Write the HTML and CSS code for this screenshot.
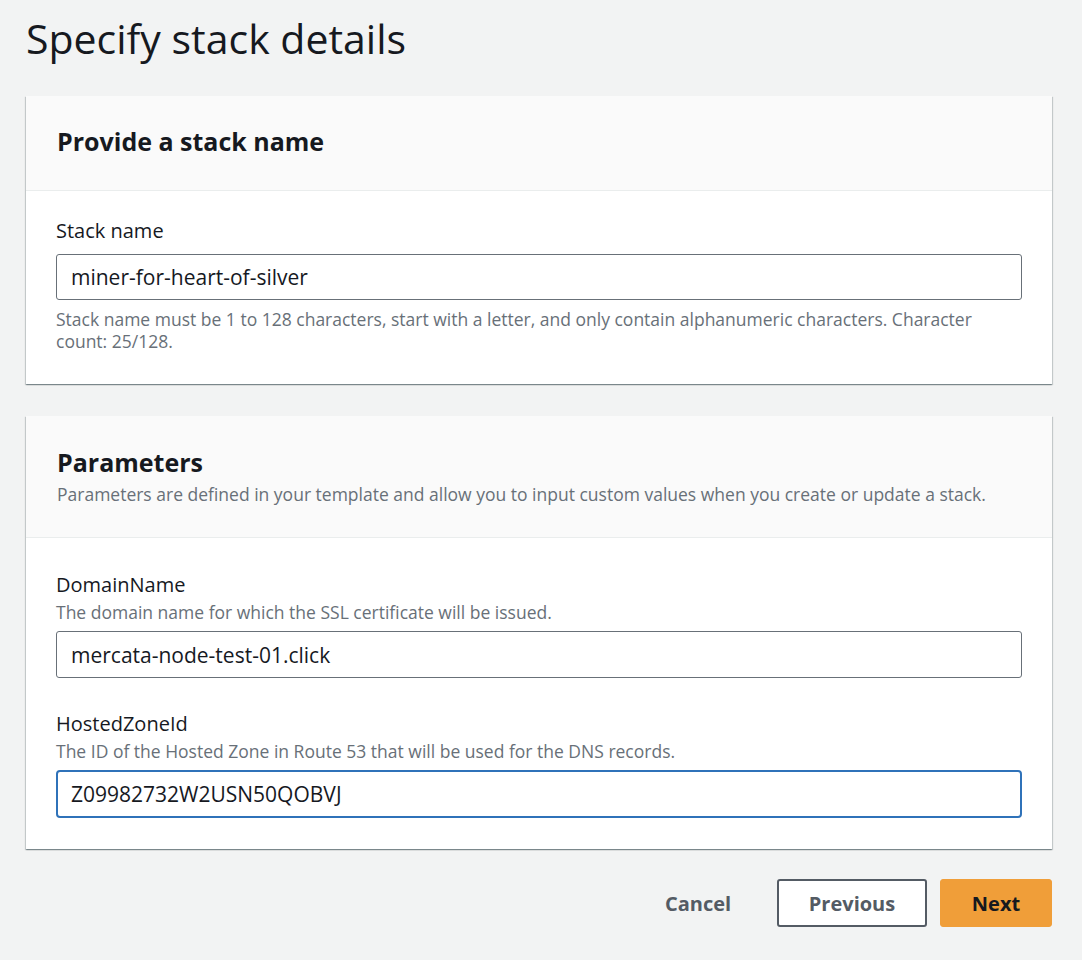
FILE: index.html
```html
<!DOCTYPE html>
<html lang="en">
<head>
<meta charset="utf-8">
<title>Specify stack details</title>
<link rel="stylesheet" href="styles.css">
</head>
<body>
<main class="page">
  <h1 class="page-title">Specify stack details</h1>

  <section class="card">
    <header class="card-header card-header-single">
      <h2 class="card-title">Provide a stack name</h2>
    </header>
    <div class="card-body card-body-stack">
      <div class="field">
        <label class="field-label" for="stackName">Stack name</label>
        <input class="text-input" id="stackName" type="text" value="miner-for-heart-of-silver">
        <p class="field-hint">Stack name must be 1 to 128 characters, start with a letter, and only contain alphanumeric characters. Character count: 25/128.</p>
      </div>
    </div>
  </section>

  <section class="card">
    <header class="card-header card-header-desc">
      <h2 class="card-title">Parameters</h2>
      <p class="card-desc">Parameters are defined in your template and allow you to input custom values when you create or update a stack.</p>
    </header>
    <div class="card-body card-body-params">
      <div class="field">
        <label class="field-label" for="domainName">DomainName</label>
        <p class="field-desc">The domain name for which the SSL certificate will be issued.</p>
        <input class="text-input" id="domainName" type="text" value="mercata-node-test-01.click">
      </div>
      <div class="field">
        <label class="field-label" for="hostedZone">HostedZoneId</label>
        <p class="field-desc">The ID of the Hosted Zone in Route 53 that will be used for the DNS records.</p>
        <input class="text-input text-input-focused" id="hostedZone" type="text" value="Z09982732W2USN50QOBVJ">
      </div>
    </div>
  </section>

  <div class="actions">
    <button class="btn btn-link" type="button">Cancel</button>
    <button class="btn btn-normal" type="button">Previous</button>
    <button class="btn btn-primary" type="button">Next</button>
  </div>
</main>
</body>
</html>
```
FILE: styles.css
```css
* { box-sizing: border-box; }

html, body {
  margin: 0;
  padding: 0;
  background: #f2f3f3;
}

body {
  font-family: "Open Sans", "Noto Sans", sans-serif;
  color: #16191f;
}

.page {
  padding: 13px 30px 0 26px;
}

.page-title {
  margin: 0 0 33px 0;
  font-size: 41px;
  line-height: 50px;
  font-weight: 400;
  color: #16191f;
}

.card {
  background: #ffffff;
  margin-bottom: 32px;
  box-shadow: 0 1px 1px 0 rgba(0, 28, 36, 0.3), 1px 1px 1px 0 rgba(0, 28, 36, 0.15), -1px 1px 1px 0 rgba(0, 28, 36, 0.15);
}

.card:last-of-type { margin-bottom: 30px; }

.card-header {
  background: #fafafa;
  border-bottom: 1px solid #eaeded;
  padding-left: 31px;
  padding-right: 31px;
}

.card-header-single {
  padding-top: 28px;
  padding-bottom: 32px;
}

.card-header-desc {
  padding-top: 29px;
  padding-bottom: 32px;
}

.card-title {
  margin: 0;
  font-size: 25px;
  line-height: 34px;
  font-weight: 700;
  color: #16191f;
}

.card-desc {
  margin: 4px 0 0 0;
  font-size: 17.5px;
  line-height: 22px;
  color: #687078;
}

.card-body {
  padding-left: 30px;
  padding-right: 30px;
}

.card-body-stack {
  padding-top: 27px;
  padding-bottom: 32px;
}

.card-body-params {
  padding-top: 34px;
  padding-bottom: 31px;
  display: flex;
  flex-direction: column;
  gap: 33px;
}

.field {
  display: flex;
  flex-direction: column;
}

.field-label {
  font-size: 20px;
  line-height: 26px;
  color: #16191f;
}

.field-desc {
  margin: 3px 0 8px 0;
  font-size: 17.5px;
  line-height: 22px;
  color: #687078;
}

.card-body-stack .field-label { margin-bottom: 10px; }

.field-hint {
  margin: 8px 0 0 0;
  font-size: 17.5px;
  line-height: 22px;
  color: #687078;
}

.text-input {
  display: block;
  width: 100%;
  height: 47px;
  padding: 0 14px;
  border: 1.5px solid #687078;
  border-radius: 3px;
  background: #ffffff;
  font-family: "Open Sans", "Noto Sans", sans-serif;
  font-size: 21px;
  color: #16191f;
  outline: none;
}

.card-body-stack .text-input { height: 46px; }

.text-input-focused {
  height: 48px;
  border: 2.5px solid #2f72b9;
  padding: 0 13px;
  border-radius: 4px;
}

.actions {
  display: flex;
  justify-content: flex-end;
  align-items: center;
  gap: 13px;
}

.btn {
  height: 48px;
  font-family: "Open Sans", "Noto Sans", sans-serif;
  font-size: 20px;
  font-weight: 700;
  border-radius: 3px;
  cursor: pointer;
  padding: 0;
}

.btn-link {
  background: transparent;
  border: none;
  color: #545b64;
  width: 110px;
  margin-right: 11px;
}

.btn-normal {
  width: 150px;
  background: #ffffff;
  border: 2px solid #545b64;
  color: #545b64;
}

.btn-primary {
  width: 112px;
  background: #f09e39;
  border: 1px solid #f09e39;
  color: #16191f;
}
```
